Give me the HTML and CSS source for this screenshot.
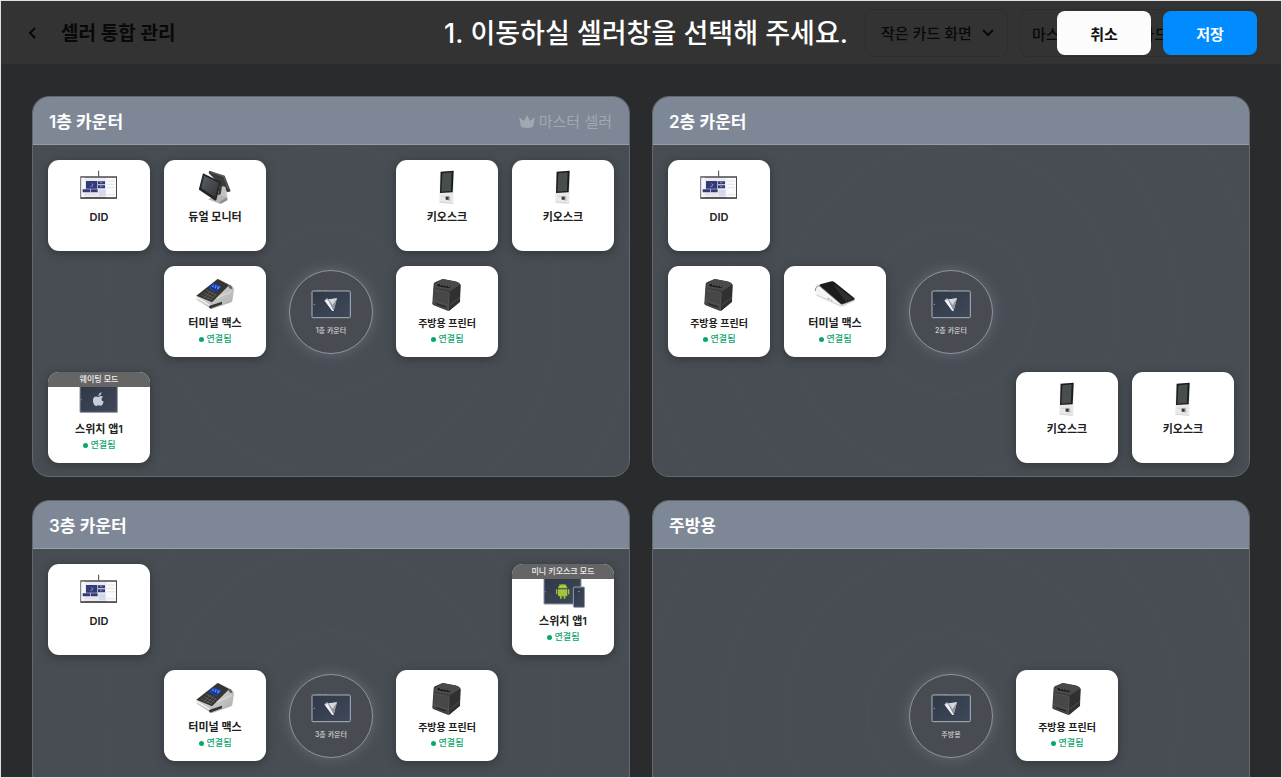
FILE: index.html
```html
<!DOCTYPE html>
<html lang="ko">
<head>
<meta charset="utf-8">
<meta name="viewport" content="width=device-width, initial-scale=1">
<title>셀러 통합 관리</title>
<link rel="stylesheet" href="styles.css">
</head>
<body>
<svg class="sprite" aria-hidden="true">
  <defs>
    <linearGradient id="screen" x1="0" y1="0" x2="1" y2="1"><stop offset="0" stop-color="#303847"/><stop offset="1" stop-color="#3e4959"/></linearGradient>
    <linearGradient id="glass" x1="0" y1="0" x2="1" y2="1"><stop offset="0" stop-color="#5c6062"/><stop offset="1" stop-color="#303436"/></linearGradient>
    <linearGradient id="metal" x1="0" y1="0" x2="1" y2="1"><stop offset="0" stop-color="#eeeeee"/><stop offset="1" stop-color="#a9a9a7"/></linearGradient>
  </defs>
  <symbol id="did" viewBox="141 57 132 108">
    <path d="M206 62v18" stroke="#444" stroke-width="3"/>
    <path d="M151 79h110v67H151z" fill="#4d474b"/>
    <path d="M154 83h104v59H154z" fill="#e9ebf3"/>
    <path d="M154 83h10v59h-10z" fill="#f7f7fb"/>
    <path d="M168 93h34v23h-34zM204 94h21v9h-21zM204 106h21v9h-21zM158 118h22v9h-22zM182 118h21v9h-21z" fill="#343a78"/>
    <path d="M206 119h20v20h-20z" fill="#d4d9e9"/>
    <path d="M229 84h29v58h-29z" fill="#fafafc"/>
    <path d="M232 93h22M232 103h22M232 113h22M159 133h40M231 134h24" stroke="#d6d6de" stroke-width="2"/>
    <path d="M184 101l5 3-3 5h-5M210 98h7M210 110h7" stroke="#aeb5dc" stroke-width="2" fill="none"/>
    <path d="M152 144h108" stroke="#403b3e" stroke-width="3"/>
  </symbol>
  <symbol id="dual" viewBox="489 57 132 108">
    <path d="M538 62l46 15 18 47-10 3-56-58z" fill="#3b3b3b"/>
    <path d="M542 66l40 14 12 36" fill="none" stroke="#777" stroke-width="2"/>
    <path d="M562 106l24 4 6 28-14 8-20-9z" fill="#c3c3c0"/>
    <path d="M534 148l27-12 30 4 1 10-21 12z" fill="#b4b4b1"/>
    <path d="M571 154l21-12v9l-21 11z" fill="#8e8e8b"/>
    <path d="M519 70l54 26-14 54q-2 3-5 1l-45-30q-3-2-2-5z" fill="#232527"/>
    <path d="M522 77l45 22-12 43-41-28z" fill="url(#glass)"/>
    <path d="M570 101l7 2-5 30-8 3z" fill="#343638"/>
  </symbol>
  <symbol id="kiosk" viewBox="136 57 132 108">
    <path d="M184 65l37-3q2 0 2 3l-2 91q0 5-4 5l-35-2q-3 0-3-4l2-87q0-3 3-3z" fill="#e9e9e8"/>
    <path d="M183 65l39-3-3 65-38 2z" fill="#191b1c"/>
    <path d="M188 70l28-3-2 56-29 2z" fill="#484d4e"/>
    <path d="M186 139h9" stroke="#c4c4c4" stroke-width="2"/>
    <path d="M197 138l14-1 2 15-11-2q-5-3-5-12z" fill="#bababa"/>
    <path d="M198 140h9v9h-9z" fill="#383838"/>
    <path d="M179 156l42 4" stroke="#ccc" stroke-width="2"/>
  </symbol>
  <symbol id="terminal" viewBox="129 57 132 108">
    <path d="M139 119l62-50q3-1 6 0l39 20q5 4 6 12l-5 33q-1 5-7 6l-55 20-45-28z" fill="url(#metal)"/>
    <path d="M139 119l64-50 35 18-52 52z" fill="#373532"/>
    <path d="M188 81l27 10-15 18-24-12z" fill="#1745bd"/>
    <path d="M191 86l20 7-8 8-19-8z" fill="#5686ec"/>
    <path d="M194 87l-4 13M202 90l-5 13M183 94l20 9" stroke="#112a7e" stroke-width="3"/>
    <path d="M153 116l31 15M161 110l30 15M169 103l30 15M162 125l21-20M171 129l20-20M180 133l18-18" stroke="#6d6c68" stroke-width="2"/>
    <path d="M233 89l9-2 6 11-7 1z" fill="#62625f"/>
    <path d="M176 150l40-13v8l-36 13z" fill="#363633"/>
    <path d="M140 124l40 25" stroke="#fff" stroke-width="3"/>
    <path d="M200 126l45-20" stroke="#eee" stroke-width="2"/>
  </symbol>
  <symbol id="printer" viewBox="136 57 132 108">
    <path d="M162 84q1-4 5-6l22-9 38 7q15 4 16 12l-2 50-32 26q-2 1-5 0l-42-16q-4-2-4-6z" fill="#3b3b3b"/>
    <path d="M165 85l24-16 38 8q11 3 14 9l-27 19-49-9z" fill="#4a4a4a"/>
    <path d="M162 99l43 8q5 1 5 8l-3 48-43-17q-4-2-4-6z" fill="#474747"/>
    <path d="M209 112q2-7 8-10l25-15-2 50-32 27z" fill="#303030"/>
    <path d="M174 87l36 7" stroke="#151515" stroke-width="6"/>
    <path d="M181 86l27 6" stroke="#8a8a8a" stroke-width="2" stroke-dasharray="5 3"/>
    <path d="M162 101l42 8q4 1 4 8l-2 45M160 133l46 15M209 148l32-24" stroke="#5a5a5a" stroke-width="2" fill="none"/>
    <path d="M170 143l29 10" stroke="#1b1b1b" stroke-width="3"/>
  </symbol>
  <symbol id="slim" viewBox="489 58 132 108">
    <path d="M497 92q2-4 10-5l38-8 70 51-2 8-33 16q-4 1-10-1l-61-26q-13-5-13-13z" fill="#f4f4f4"/>
    <path d="M511 86l34-9q4-1 7 1l61 49q3 3-1 5l-33 13q-4 1-7-1l-63-54q-1-3 2-4z" fill="#1c1c1c"/>
    <path d="M549 84l60 45-22 9z" fill="#303030"/>
    <path d="M496 106q-1-12 11-16l67 56M574 147l39-14" fill="none" stroke="#555" stroke-width="2"/>
    <path d="M500 118l69 31q5 2 12 0l29-14" fill="none" stroke="#bbb" stroke-width="2"/>
    <path d="M532 128l8 3M543 133l4 2" stroke="#777" stroke-width="2"/>
  </symbol>
  <symbol id="apple" viewBox="141 60 132 108">
    <path d="M150 76h112v78H150z" fill="url(#screen)" stroke="#8993a7" stroke-width="3"/>
    <circle cx="155" cy="116" r="1.5" fill="#c5cad4"/>
    <path d="M205 106q1-10 10-12-1 9-10 12M219 107q-7-4-13 1-15-5-17 8-1 12 7 18 3 2 8-1 3-1 7 1 6 1 10-12-12-6-2-15z" fill="#c8ccda"/>
  </symbol>
  <symbol id="android" viewBox="125 69 132 108">
    <path d="M134 83h111v79H134z" fill="url(#screen)" stroke="#8993a7" stroke-width="3"/>
    <circle cx="139" cy="125" r="1.5" fill="#c5cad4"/>
    <path d="M176 115q1-11 14-12 13 1 14 12zM176 118h28v18q0 3-3 3h-3v7h-5v-7h-6v7h-5v-7h-3q-3 0-3-3zM170 118h4v15h-4zM206 118h4v15h-4z" fill="#a1c43a"/>
    <path d="M180 102l4 5M200 102l-4 5" stroke="#a1c43a" stroke-width="2"/>
    <path d="M185 109v2M195 109v2" stroke="#fff" stroke-width="2"/>
    <rect x="222" y="111" width="34" height="61" rx="3" fill="#3b4454" stroke="#939cad" stroke-width="3"/>
    <path d="M226 116h26v50h-26z" fill="url(#screen)"/>
    <path d="M236 125h5" stroke="#c5cad4" stroke-width="2"/>
  </symbol>
  <symbol id="tablet" viewBox="477 96 132 99">
    <rect x="486" y="105" width="115" height="80" rx="3" fill="url(#screen)" stroke="#abb1bd" stroke-width="3"/>
    <path d="M499 103h15M520 103h12" stroke="#a5abb5" stroke-width="1"/>
    <circle cx="493" cy="145" r="1.5" fill="#d5d9e0"/>
    <path d="M523 133l9-7 3 5 26-4-10 37q-2 3-5-1z" fill="#b9bcc2"/>
    <path d="M532 131l29-4-10 37z" fill="#8f949d"/>
    <path d="M524 134l10-2 17 33q-4 1-6-2z" fill="#f2f3f5"/>
    <path d="M535 130l26-3-13 20z" fill="#d5d8dc"/>
  </symbol>
</svg>

<div class="app">
  <header class="topbar">
    <button class="back" type="button" aria-label="뒤로">
      <svg viewBox="0 0 10 14" width="10" height="14"><path d="M7 2L2 7l5 5" fill="none" stroke="currentColor" stroke-width="2"/></svg>
    </button>
    <h1 class="page-title">셀러 통합 관리</h1>
    <div class="picker">
      <select class="picker-select" aria-label="화면 크기"><option>작은 카드 화면</option></select>
      <svg class="picker-arrow" viewBox="0 0 14 10" width="14" height="10"><path d="M2 2l5 5 5-5" fill="none" stroke="currentColor" stroke-width="2"/></svg>
    </div>
    <button class="master-button" type="button">마스터 셀러 작은 카드</button>
  </header>

  <div class="guide">
    <p class="guide-text">1. 이동하실 셀러창을 선택해 주세요.</p>
    <div class="guide-actions">
      <button class="action cancel" type="button">취소</button>
      <button class="action save" type="button">저장</button>
    </div>
  </div>

  <main class="sellers">
    <section class="seller">
      <header class="seller-head">
        <h2 class="seller-name">1층 카운터</h2>
        <span class="master"><svg viewBox="0 0 16 13" width="16" height="13"><path d="M0 2l5 4 3-6 3 6 5-4-2 10q-6 2-12 0z" fill="currentColor"/></svg>마스터 셀러</span>
      </header>
      <div class="floor">
        <article class="device c1 r1"><svg class="pic"><use href="#did"/></svg><h3 class="label">DID</h3></article>
        <article class="device c2 r1"><svg class="pic"><use href="#dual"/></svg><h3 class="label">듀얼 모니터</h3></article>
        <article class="device c4 r1"><svg class="pic"><use href="#kiosk"/></svg><h3 class="label">키오스크</h3></article>
        <article class="device c5 r1"><svg class="pic"><use href="#kiosk"/></svg><h3 class="label">키오스크</h3></article>
        <article class="device c2 r2"><svg class="pic"><use href="#terminal"/></svg><h3 class="label">터미널 맥스</h3><p class="status">연결됨</p></article>
        <div class="hub"><svg class="hub-pic"><use href="#tablet"/></svg><span class="hub-name">1층 카운터</span></div>
        <article class="device c4 r2"><svg class="pic"><use href="#printer"/></svg><h3 class="label long">주방용 프린터</h3><p class="status">연결됨</p></article>
        <article class="device c1 r3"><span class="mode">웨이팅 모드</span><svg class="pic"><use href="#apple"/></svg><h3 class="label">스위치 앱1</h3><p class="status">연결됨</p></article>
      </div>
    </section>

    <section class="seller">
      <header class="seller-head"><h2 class="seller-name">2층 카운터</h2></header>
      <div class="floor">
        <article class="device c1 r1"><svg class="pic"><use href="#did"/></svg><h3 class="label">DID</h3></article>
        <article class="device c1 r2"><svg class="pic"><use href="#printer"/></svg><h3 class="label long">주방용 프린터</h3><p class="status">연결됨</p></article>
        <article class="device c2 r2"><svg class="pic"><use href="#slim"/></svg><h3 class="label">터미널 맥스</h3><p class="status">연결됨</p></article>
        <div class="hub"><svg class="hub-pic"><use href="#tablet"/></svg><span class="hub-name">2층 카운터</span></div>
        <article class="device c4 r3"><svg class="pic"><use href="#kiosk"/></svg><h3 class="label">키오스크</h3></article>
        <article class="device c5 r3"><svg class="pic"><use href="#kiosk"/></svg><h3 class="label">키오스크</h3></article>
      </div>
    </section>

    <section class="seller">
      <header class="seller-head"><h2 class="seller-name">3층 카운터</h2></header>
      <div class="floor">
        <article class="device c1 r1"><svg class="pic"><use href="#did"/></svg><h3 class="label">DID</h3></article>
        <article class="device c5 r1"><span class="mode">미니 키오스크 모드</span><svg class="pic"><use href="#android"/></svg><h3 class="label">스위치 앱1</h3><p class="status">연결됨</p></article>
        <article class="device c2 r2"><svg class="pic"><use href="#terminal"/></svg><h3 class="label">터미널 맥스</h3><p class="status">연결됨</p></article>
        <div class="hub"><svg class="hub-pic"><use href="#tablet"/></svg><span class="hub-name">3층 카운터</span></div>
        <article class="device c4 r2"><svg class="pic"><use href="#printer"/></svg><h3 class="label long">주방용 프린터</h3><p class="status">연결됨</p></article>
      </div>
    </section>

    <section class="seller">
      <header class="seller-head"><h2 class="seller-name">주방용</h2></header>
      <div class="floor">
        <div class="hub"><svg class="hub-pic"><use href="#tablet"/></svg><span class="hub-name">주방용</span></div>
        <article class="device c4 r2"><svg class="pic"><use href="#printer"/></svg><h3 class="label long">주방용 프린터</h3><p class="status">연결됨</p></article>
      </div>
    </section>
  </main>
</div>
</body>
</html>
```
FILE: styles.css
```css
* { box-sizing: border-box; }
body, h1, h2, h3, p { margin: 0; }
body {
  background: #dde1df;
  font-family: Inter, "Noto Sans CJK KR", sans-serif;
  font-weight: 500;
}
button, select { font: inherit; }
.sprite { position: absolute; width: 0; height: 0; }

.app {
  position: relative;
  height: 100vh;
  overflow: hidden;
  border: 1px solid #dde1df;
  background: #292b2c;
}

.topbar {
  display: flex;
  align-items: center;
  gap: 12px;
  height: 63px;
  padding: 0 25px 0 20px;
  background: #333;
  color: #090909;
}
.back {
  display: flex;
  justify-content: center;
  width: 24px;
  padding: 4px;
  border: 0;
  background: none;
  color: inherit;
}
.page-title {
  flex: 1;
  padding: 2px 0 0 4px;
  font-size: 19px;
  font-weight: 600;
  line-height: 28px;
}
.picker { position: relative; }
.picker-select, .master-button {
  height: 48px;
  border: 1px solid #2d2d2d;
  border-radius: 8px;
  background: none;
  color: inherit;
  font-size: 15px;
}
.picker-select {
  width: 143px;
  padding: 2px 15px 0;
  appearance: none;
  opacity: 1;
}
.picker-arrow { position: absolute; top: 19px; right: 13px; pointer-events: none; }
.master-button { width: 236px; padding: 2px 11px 0; text-align: left; white-space: nowrap; }

.guide {
  position: absolute;
  inset: 0 0 auto;
  display: flex;
  align-items: center;
  justify-content: center;
  height: 63px;
}
.guide-text {
  padding: 3px 0 0 10px;
  color: #fff;
  font-size: 27px;
  line-height: 36px;
}
.guide-actions {
  position: absolute;
  top: 10px;
  right: 24px;
  display: flex;
  gap: 12px;
}
.action {
  width: 94px;
  height: 44px;
  border: 0;
  border-radius: 8px;
  font-size: 15px;
  font-weight: 600;
}
.cancel { background: #fcfcfd; color: #111; }
.save { background: #008cff; color: #fff; }

.sellers {
  display: grid;
  grid-template-columns: 1fr 1fr;
  gap: 23px 22px;
  padding: 32px 31px;
}
.seller {
  overflow: hidden;
  border: 1px solid #62686e;
  border-radius: 17px;
  background: #484d54;
}
.seller-head {
  display: flex;
  align-items: center;
  justify-content: space-between;
  height: 48px;
  padding: 2px 17px 0 16px;
  border-bottom: 1px solid #959da6;
  background: #7e8795;
}
.seller-name { color: #fff; font-size: 17px; font-weight: 600; line-height: 24px; }
.master {
  display: flex;
  align-items: center;
  gap: 4px;
  color: #a1a8b1;
  font-size: 15px;
  font-weight: 400;
  line-height: 24px;
}
.floor {
  display: grid;
  grid-template-columns: repeat(5, 1fr);
  grid-template-rows: repeat(3, 91px);
  gap: 15px 14px;
  padding: 15px 15px 13px;
  background: radial-gradient(circle,
    transparent 82px, #4b5056 83px, transparent 84px,
    transparent 164px, #4a4f56 165px, transparent 166px,
    transparent 226px, #4a4f55 227px, transparent 228px,
    transparent 302px, #4a4f55 303px, transparent 304px);
}
.c1 { grid-column: 1; }
.c2 { grid-column: 2; }
.c4 { grid-column: 4; }
.c5 { grid-column: 5; }
.r1 { grid-row: 1; }
.r2 { grid-row: 2; }
.r3 { grid-row: 3; }

.device {
  position: relative;
  display: flex;
  flex-direction: column;
  align-items: center;
  padding-top: 9px;
  overflow: hidden;
  border-radius: 11px;
  background: #fff;
  box-shadow: 0 2px 10px rgba(30, 30, 32, .5);
}
.pic { flex: none; width: 44px; height: 36px; }
.label {
  margin-top: 4px;
  color: #202020;
  font-size: 11px;
  font-weight: 600;
  line-height: 16px;
  white-space: nowrap;
}
.label.long { font-size: 10px; }
.status {
  display: flex;
  align-items: center;
  gap: 3px;
  color: #0ba66c;
  font-size: 9px;
  line-height: 16px;
}
.status::before {
  width: 5px;
  height: 5px;
  border-radius: 50%;
  background: currentColor;
  content: "";
}
.mode {
  position: absolute;
  inset: 0 0 auto;
  background: #656565;
  color: #f0f0f0;
  font-size: 8px;
  line-height: 15px;
  text-align: center;
}
.hub {
  grid-area: 2 / 3;
  place-self: center;
  display: flex;
  flex-direction: column;
  align-items: center;
  width: 84px;
  height: 84px;
  padding-top: 17px;
  border: 1px solid #8f949c;
  border-radius: 50%;
  background: #484c52;
  box-shadow: 0 0 14px rgba(135, 142, 160, .45);
}
.hub-pic { flex: none; width: 44px; height: 33px; }
.hub-name { margin-top: 5px; color: #d2d4d6; font-size: 7px; line-height: 10px; }
```
